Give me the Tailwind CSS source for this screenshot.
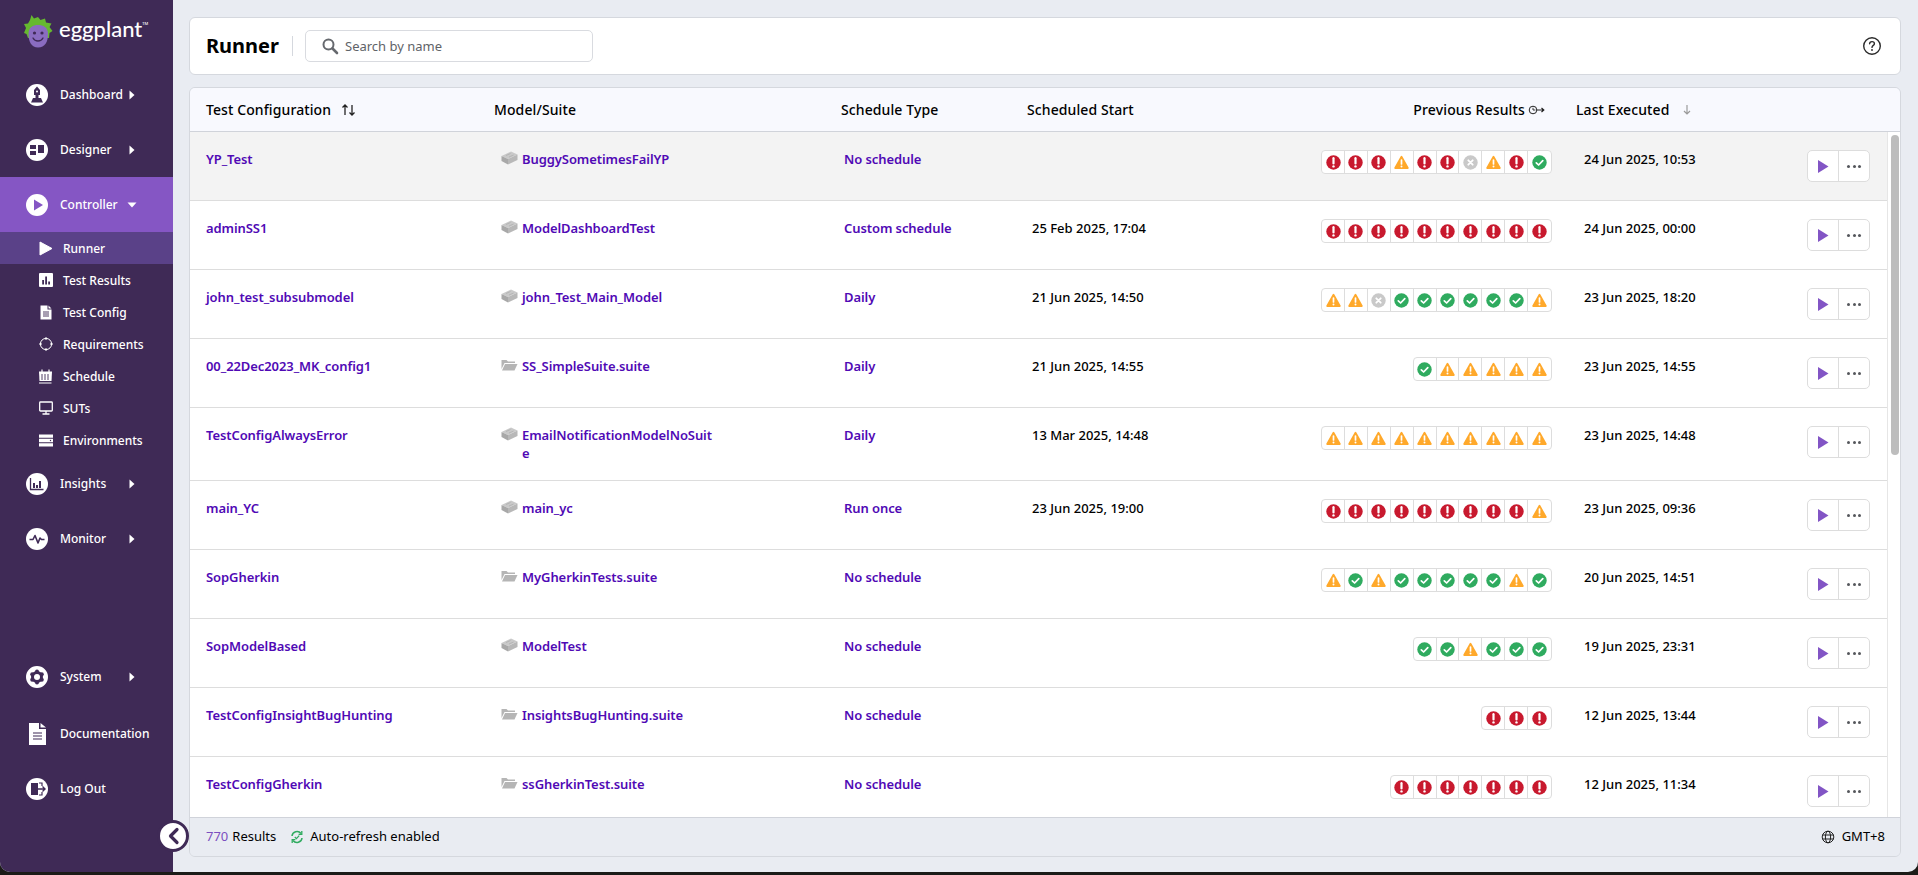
<!DOCTYPE html>
<html lang="en">
<head>
  <meta charset="UTF-8" />
  <title>Runner</title>
  <script src="https://cdn.jsdelivr.net/npm/@tailwindcss/browser@4"></script>
</head>
<body class="bg-[#1b1b18] h-[875px] overflow-hidden font-['Noto_Sans',sans-serif] text-[13px] text-black">
  <div class="flex h-[872px] rounded-b-[10px] overflow-hidden bg-[#e9ecf2] relative">

    <!-- sidebar -->
    <aside class="w-[173px] shrink-0 bg-[#3f2a56] text-white flex flex-col font-medium text-[12px]">
      <div class="h-[67px] pl-[23px] pt-[14px] flex items-start gap-[6px]">
        <svg width="30" height="34" viewBox="0 0 30 34">
          <path d="M1 10 L5 9.5 L7 6 L8.5 1 L11 4.5 L15 3 L17.5 6 L22 4.5 L23 8.5 L28.5 9.5 L26.5 13 L29.5 17 L26.5 19 L26 24 L5 24 L3.5 20 L1 19 L3 14 Z" fill="#66b92f"/>
          <path d="M5.5 20 C5.5 13 10 11 15 11 C20 11 25 13 25 20 C25 28 22 33.5 15 33.5 C8.5 33.5 5.5 28 5.5 20 Z" fill="#8a6cc0"/>
          <circle cx="11.5" cy="19" r="1.6" fill="#3f2a56"/><circle cx="19" cy="19" r="1.6" fill="#3f2a56"/>
          <path d="M10 24 C12 28 18 28 20 24" fill="none" stroke="#3f2a56" stroke-width="1.3" stroke-linecap="round"/>
        </svg>
        <span class="font-['Lato',sans-serif] font-medium text-[22px] leading-[26px] mt-[2px]">eggplant</span>
        <span class="text-[4px] leading-none ml-[-6px] mt-[8px]">TM</span>
      </div>
      <nav id="nav" class="flex flex-col"></nav>
      <div id="navBottom" class="flex flex-col mt-[83px]"></div>
    </aside>

    <!-- collapse toggle -->
    <button class="absolute left-[157px] top-[820px] w-[32px] h-[32px] rounded-full bg-white border-[3px] border-[#3f2a56] flex items-center justify-center">
      <svg width="13" height="18" viewBox="0 0 13 18"><path d="M10 2.5 L3.5 9 L10 15.5" fill="none" stroke="#3f2a56" stroke-width="3.2" stroke-linecap="round" stroke-linejoin="round"/></svg>
    </button>

    <!-- main -->
    <main class="flex-1 min-w-0 pl-[16px] pr-[17px] pt-[17px] pb-[15px] flex flex-col gap-[12px]">
      <div class="h-[58px] shrink-0 bg-white border border-[#d5d8de] rounded-[6px] flex items-center pl-[16px] pr-[18px]">
        <h1 class="text-[20px] font-bold leading-none w-[86px]">Runner</h1>
        <div class="h-[20px] w-px bg-[#d5d8de]"></div>
        <div class="ml-[12px] w-[288px] h-[32px] border border-[#d9dbe0] rounded-[5px] flex items-center pl-[15px] gap-[6px] text-[13px] text-[#5f6368]">
          <svg width="18" height="18" viewBox="0 0 18 18"><circle cx="7.5" cy="7.5" r="5" fill="none" stroke="#66696e" stroke-width="2"/><path d="M11.5 11.5 L16 16" stroke="#66696e" stroke-width="2.6" stroke-linecap="round"/></svg>
          <span class="pt-[1px]">Search by name</span>
        </div>
        <svg class="ml-auto" width="20" height="20" viewBox="0 0 20 20"><circle cx="10" cy="10" r="8.3" fill="none" stroke="#2b2b2b" stroke-width="1.4"/><path d="M7.6 7.8 C7.6 6.3 8.7 5.6 10 5.6 C11.4 5.6 12.4 6.4 12.4 7.7 C12.4 9.4 10 9.4 10 11.4" fill="none" stroke="#2b2b2b" stroke-width="1.4" stroke-linecap="round"/><circle cx="10" cy="14" r="0.9" fill="#2b2b2b"/></svg>
      </div>

      <div class="flex-1 min-h-0 flex flex-col border border-[#d5d8de] rounded-[6px] overflow-hidden">
        <div class="h-[44px] shrink-0 bg-[#f8f9fe] border-b border-[#d0d3da] pl-[16px] grid grid-cols-[288px_347px_186px_200px_325px_255px] items-center font-medium text-[14px] tracking-[0.1px]">
          <div class="flex items-center gap-[10px]">Test Configuration
            <svg width="15" height="14" viewBox="0 0 15 14"><path d="M4 12 V2 M1.5 4.5 L4 2 L6.5 4.5 M11 2 V12 M8.5 9.5 L11 12 L13.5 9.5" fill="none" stroke="#222" stroke-width="1.3"/></svg>
          </div>
          <div>Model/Suite</div>
          <div>Schedule Type</div>
          <div>Scheduled Start</div>
          <div class="flex items-center justify-end gap-[3px] pr-[7px] tracking-[0.15px]">Previous Results
            <svg width="17" height="10" viewBox="0 0 17 10"><circle cx="5" cy="5" r="3.8" fill="none" stroke="#222" stroke-width="1"/><path d="M5 2.8 V5 H7.4" fill="none" stroke="#222" stroke-width="0.9"/><path d="M9 5 H15.5 M13.5 3 L15.8 5 L13.5 7" fill="none" stroke="#222" stroke-width="1.2"/></svg>
          </div>
          <div class="flex items-center gap-[13px] pl-[24px]">Last Executed
            <svg width="10" height="11" viewBox="0 0 10 11"><path d="M5 1 V10 M2 7 L5 10 L8 7" fill="none" stroke="#9a9a9a" stroke-width="1.2"/></svg>
          </div>
        </div>

        <div class="flex-1 min-h-0 flex bg-white overflow-hidden">
          <div id="rows" class="flex-1 min-w-0"></div>
          <div class="w-[13px] shrink-0 border-l border-[#e6e6e6] pl-[3px] pt-[3px]">
            <div class="w-[8px] h-[320px] rounded-full bg-[#bdbdbd]"></div>
          </div>
        </div>

        <div class="h-[39px] shrink-0 bg-[#e9ecf2] border-t border-[#d0d3da] flex items-center pl-[16px] pr-[15px]">
          <span class="text-[#7b4fc0]">770</span><span class="ml-[4px]">Results</span>
          <svg class="ml-[14px]" width="14" height="14" viewBox="0 0 14 14"><path d="M2 6 A5 5 0 0 1 11 3.5 M12 8 A5 5 0 0 1 3 10.5" fill="none" stroke="#2fab5f" stroke-width="1.5"/><path d="M11.8 1 V4.3 H8.6 M2.2 13 V9.7 H5.4" fill="none" stroke="#2fab5f" stroke-width="1.3"/><path d="M4.8 7 L6.4 8.6 L9.2 5.6" fill="none" stroke="#2fab5f" stroke-width="1.3"/></svg>
          <span class="ml-[6px]">Auto-refresh enabled</span>
          <svg class="ml-auto" width="14" height="14" viewBox="0 0 14 14"><g fill="none" stroke="#222" stroke-width="1"><circle cx="7" cy="7" r="5.8"/><ellipse cx="7" cy="7" rx="2.6" ry="5.8"/><path d="M1.4 5 H12.6 M1.4 9 H12.6"/></g></svg>
          <span class="ml-[7px]">GMT+8</span>
        </div>
      </div>
    </main>
  </div>

  <script>
    const P = '#3f2a56';
    const circle = inner => `<svg width="22" height="22" viewBox="0 0 22 22"><circle cx="11" cy="11" r="11" fill="#fff"/>${inner}</svg>`;
    const icons = {
      dashboard: circle(`<path d="M11 2.5 L14 6 V11 H8 V6 Z" fill="${P}"/><rect x="9.5" y="11" width="3" height="3" fill="${P}"/><path d="M5 18.5 L7 14 H15 L17 18.5 Z" fill="${P}"/><circle cx="11" cy="7.5" r="1" fill="#fff"/>`),
      designer: circle(`<path d="M4 6 H10 V10 H4 Z M12 6 H18 V14 H12 Z M4 12 H10 V16 H4 Z" fill="${P}"/><path d="M10 8 H12 M10 14 H12" stroke="#fff" stroke-width="1"/>`),
      controller: circle(`<path d="M8 5.5 L17 11 L8 16.5 Z" fill="#8556c4"/>`),
      insights: circle(`<path d="M4.5 5 V16.5 H17.5" fill="none" stroke="${P}" stroke-width="1.3"/><path d="M7 10 H9 V15 H7 Z M10 12 H12 V15 H10 Z M13 8 H15 V15 H13 Z" fill="${P}"/>`),
      monitor: circle(`<path d="M3.5 11.5 H7 L9 7.5 L12 15 L14 10 L15.5 11.5 H18.5" fill="none" stroke="${P}" stroke-width="1.6" stroke-linejoin="round"/>`),
      system: `<svg width="22" height="22" viewBox="0 0 22 22"><circle cx="11" cy="11" r="8.5" fill="none" stroke="#fff" stroke-width="5" /><circle cx="11" cy="11" r="3" fill="#fff"/><g fill="${P}"><circle cx="11" cy="5.5" r="2"/><circle cx="11" cy="16.5" r="2"/><circle cx="6.2" cy="8.2" r="2"/><circle cx="15.8" cy="8.2" r="2"/><circle cx="6.2" cy="13.8" r="2"/><circle cx="15.8" cy="13.8" r="2"/></g></svg>`,
      docs: `<svg width="22" height="24" viewBox="0 0 22 24"><path d="M3 1 H13 V7 H20 V23 H3 Z M14.5 1 L20 5.5 H14.5 Z" fill="#fff"/><path d="M7 11 H16 M7 14 H16 M7 17 H16" stroke="${P}" stroke-width="1.2"/></svg>`,
      logout: circle(`<path d="M5 5 H12 V17 H5 Z" fill="${P}"/><path d="M13 5 H16 V8 M16 14 V17 H13" fill="none" stroke="${P}" stroke-width="1.2"/><path d="M12 11 H19 M16.5 8.5 L19 11 L16.5 13.5" fill="none" stroke="${P}" stroke-width="1.4"/>`),
      runner: `<svg width="14" height="15" viewBox="0 0 14 15"><path d="M1 1 L13 7.5 L1 14 Z" fill="#fff" stroke="#fff" stroke-linejoin="round"/></svg>`,
      results: `<svg width="14" height="14" viewBox="0 0 14 14"><rect width="14" height="14" rx="1" fill="#fff"/><path d="M3.2 7 H5 V11.5 H3.2 Z M6.2 3.5 H8 V11.5 H6.2 Z M9.2 8.5 H11 V11.5 H9.2 Z" fill="${P}"/></svg>`,
      config: `<svg width="12" height="15" viewBox="0 0 12 15"><path d="M0.5 0.5 H7.5 V4.5 H11.5 V14.5 H0.5 Z M8.5 0.5 L11.5 3.5 H8.5 Z" fill="#fff"/><path d="M3 7 H9 M3 9 H9 M3 11 H9" stroke="${P}" stroke-width="0.9"/></svg>`,
      req: `<svg width="14" height="14" viewBox="0 0 14 14"><circle cx="7" cy="7" r="5.6" fill="none" stroke="#fff" stroke-width="1"/><path d="M7 0 V3 M7 11 V14 M0 7 H3 M11 7 H14" stroke="#fff" stroke-width="1"/></svg>`,
      schedule: `<svg width="15" height="15" viewBox="0 0 15 15"><path d="M1 2.5 H14 L13.5 12 H1.5 Z" fill="#fff"/><path d="M1 14 H13.5" stroke="#fff"/><path d="M4 0.5 V3 M11 0.5 V3" stroke="#fff" stroke-width="1.2"/><path d="M3 6 H12 M3 8 H12 M3 10 H12" stroke="${P}" stroke-width="0.9" stroke-dasharray="2 1"/></svg>`,
      suts: `<svg width="14" height="14" viewBox="0 0 14 14"><rect x="0.7" y="1" width="12.6" height="9" rx="0.8" fill="none" stroke="#fff" stroke-width="1.3"/><path d="M7 10 V12.5 M3.5 13 H10.5" stroke="#fff" stroke-width="1.3"/></svg>`,
      env: `<svg width="14" height="13" viewBox="0 0 14 13"><path d="M0 0.5 H14 V3.8 H0 Z M0 4.8 H14 V8.2 H0 Z M0 9.2 H14 V12.5 H0 Z" fill="#fff"/><circle cx="11.5" cy="6.5" r="0.7" fill="${P}"/></svg>`,
    };
    const arrowRight = `<svg width="6" height="10" viewBox="0 0 6 10"><path d="M0.5 0.5 L5.5 5 L0.5 9.5 Z" fill="#fff"/></svg>`;
    const arrowDown = `<svg width="10" height="6" viewBox="0 0 10 6"><path d="M0.5 0.5 H9.5 L5 5.5 Z" fill="#fff"/></svg>`;

    const mainItem = (icon, label, arrow, active) => `
      <div class="h-[55px] flex items-center relative ${active ? 'bg-[#8556c4]' : ''}">
        <span class="absolute left-[26px] w-[22px] flex justify-center">${icons[icon]}</span>
        <span class="ml-[60px]">${label}</span>
        ${arrow ? `<span class="absolute ${active ? 'left-[127px]' : 'left-[129px]'} flex">${active ? arrowDown : arrowRight}</span>` : ''}
      </div>`;
    const subItem = (icon, label, active) => `
      <div class="h-[32px] flex items-center relative ${active ? 'bg-[#5a4188]' : ''}">
        <span class="absolute left-[38px] w-[15px] flex justify-center">${icons[icon]}</span>
        <span class="ml-[63px] pt-[2px]">${label}</span>
      </div>`;

    document.getElementById('nav').innerHTML =
      mainItem('dashboard', 'Dashboard', true) +
      mainItem('designer', 'Designer', true) +
      mainItem('controller', 'Controller', true, true) +
      subItem('runner', 'Runner', true) +
      subItem('results', 'Test Results') +
      subItem('config', 'Test Config') +
      subItem('req', 'Requirements') +
      subItem('schedule', 'Schedule') +
      subItem('suts', 'SUTs') +
      subItem('env', 'Environments') +
      mainItem('insights', 'Insights', true) +
      mainItem('monitor', 'Monitor', true);
    document.getElementById('navBottom').innerHTML =
      mainItem('system', 'System', true) +
      '<div class="h-[2px]"></div>' +
      mainItem('docs', 'Documentation') +
      mainItem('logout', 'Log Out');

    const status = {
      E: `<svg width="15" height="15" viewBox="0 0 15 15"><circle cx="7.5" cy="7.5" r="7.2" fill="#c8192e"/><path d="M7.5 3.2 V8.4" stroke="#fff" stroke-width="2.2" stroke-linecap="round"/><circle cx="7.5" cy="11.4" r="1.2" fill="#fff"/></svg>`,
      W: `<svg width="15" height="15" viewBox="0 0 15 15"><path d="M7.5 1.8 L13.8 13 H1.2 Z" fill="#ffa92b" stroke="#ffa92b" stroke-width="1.8" stroke-linejoin="round"/><path d="M7.5 5 V9" stroke="#fff" stroke-width="1.7" stroke-linecap="round"/><circle cx="7.5" cy="11.6" r="1" fill="#fff"/></svg>`,
      X: `<svg width="15" height="15" viewBox="0 0 15 15"><circle cx="7.5" cy="7.5" r="7.2" fill="#c9c9c9"/><path d="M5.3 5.3 L9.7 9.7 M9.7 5.3 L5.3 9.7" stroke="#fff" stroke-width="1.8" stroke-linecap="round"/></svg>`,
      C: `<svg width="15" height="15" viewBox="0 0 15 15"><circle cx="7.5" cy="7.5" r="7.2" fill="#2fab5f"/><path d="M4.3 7.8 L6.6 10 L10.8 5.6" fill="none" stroke="#fff" stroke-width="1.7" stroke-linecap="round" stroke-linejoin="round"/></svg>`,
    };
    const brick = `<svg width="17" height="14" viewBox="0 0 17 14"><path d="M0.5 5 L10 0.5 L16.5 3.5 L7 8 Z" fill="#c9c9c9"/><path d="M0.5 5 V10 L7 13.5 V8 Z" fill="#a8a8a8"/><path d="M7 8 V13.5 L16.5 9 V3.5 Z" fill="#b8b8b8"/><path d="M5 4.5 L9.5 2.5 M8 6 L12.5 4" stroke="#b0b0b0" stroke-width="0.8"/></svg>`;
    const folder = `<svg width="17" height="14" viewBox="0 0 17 14"><path d="M0.5 2 H5.5 L7 3.5 H14 V5 H3.5 L0.5 11 Z" fill="#b5b5b5"/><path d="M4 6 H16.5 L13.5 12.5 H1 Z" fill="#b5b5b5"/></svg>`;

    const data = [
      ['YP_Test', brick, 'BuggySometimesFailYP', 'No schedule', '', 'EEEWEEXWEC', '24 Jun 2025, 10:53'],
      ['adminSS1', brick, 'ModelDashboardTest', 'Custom schedule', '25 Feb 2025, 17:04', 'EEEEEEEEEE', '24 Jun 2025, 00:00'],
      ['john_test_subsubmodel', brick, 'john_Test_Main_Model', 'Daily', '21 Jun 2025, 14:50', 'WWXCCCCCCW', '23 Jun 2025, 18:20'],
      ['00_22Dec2023_MK_config1', folder, 'SS_SimpleSuite.suite', 'Daily', '21 Jun 2025, 14:55', 'CWWWWW', '23 Jun 2025, 14:55'],
      ['TestConfigAlwaysError', brick, 'EmailNotificationModelNoSuite', 'Daily', '13 Mar 2025, 14:48', 'WWWWWWWWWW', '23 Jun 2025, 14:48'],
      ['main_YC', brick, 'main_yc', 'Run once', '23 Jun 2025, 19:00', 'EEEEEEEEEW', '23 Jun 2025, 09:36'],
      ['SopGherkin', folder, 'MyGherkinTests.suite', 'No schedule', '', 'WCWCCCCCWC', '20 Jun 2025, 14:51'],
      ['SopModelBased', brick, 'ModelTest', 'No schedule', '', 'CCWCCC', '19 Jun 2025, 23:31'],
      ['TestConfigInsightBugHunting', folder, 'InsightsBugHunting.suite', 'No schedule', '', 'EEE', '12 Jun 2025, 13:44'],
      ['TestConfigGherkin', folder, 'ssGherkinTest.suite', 'No schedule', '', 'EEEEEEE', '12 Jun 2025, 11:34'],
    ];

    document.getElementById('rows').innerHTML = data.map((r, i) => `
      <div class="${i === 0 ? 'bg-[#f3f3f3]' : ''} border-b border-[#dddddd] ${i === 4 ? 'h-[73px]' : 'h-[69px]'} pl-[16px] pt-[18px] grid grid-cols-[288px_347px_186px_200px_325px_255px_63px] items-start font-medium leading-[18px]">
        <a class="font-semibold text-[#5009b5] tracking-[-0.08px]">${r[0]}</a>
        <div class="flex items-start pl-[7px] gap-[4px]">
          <span class="w-[17px] shrink-0 mt-[1px]">${r[1]}</span>
          <a class="font-semibold text-[#5009b5] tracking-[-0.08px] w-[192px] break-all">${r[2]}</a>
        </div>
        <a class="font-semibold text-[#5009b5] tracking-[-0.08px] pl-[3px]">${r[3]}</a>
        <div class="pl-[5px]">${r[4]}</div>
        <div class="flex justify-end">
          <div class="flex h-[24px] bg-white border border-[#dddddd] rounded-[4px] divide-x divide-[#dddddd]">
            ${[...r[5]].map(s => `<span class="w-[22.9px] flex items-center justify-center">${status[s]}</span>`).join('')}
          </div>
        </div>
        <div class="pl-[32px]">${r[6]}</div>
        <div class="flex h-[32px] w-[63px] bg-white border border-[#dddddd] rounded-[5px] divide-x divide-[#dddddd]">
          <span class="flex-1 flex items-center justify-center"><svg width="12" height="15" viewBox="0 0 12 15"><path d="M1 1 L11.5 7.5 L1 14 Z" fill="#8255c5"/></svg></span>
          <span class="flex-1 flex items-center justify-center gap-[2.5px]">
            <i class="w-[3px] h-[3px] rounded-full bg-[#55575c]"></i><i class="w-[3px] h-[3px] rounded-full bg-[#55575c]"></i><i class="w-[3px] h-[3px] rounded-full bg-[#55575c]"></i>
          </span>
        </div>
      </div>`).join('');
  </script>
</body>
</html>
